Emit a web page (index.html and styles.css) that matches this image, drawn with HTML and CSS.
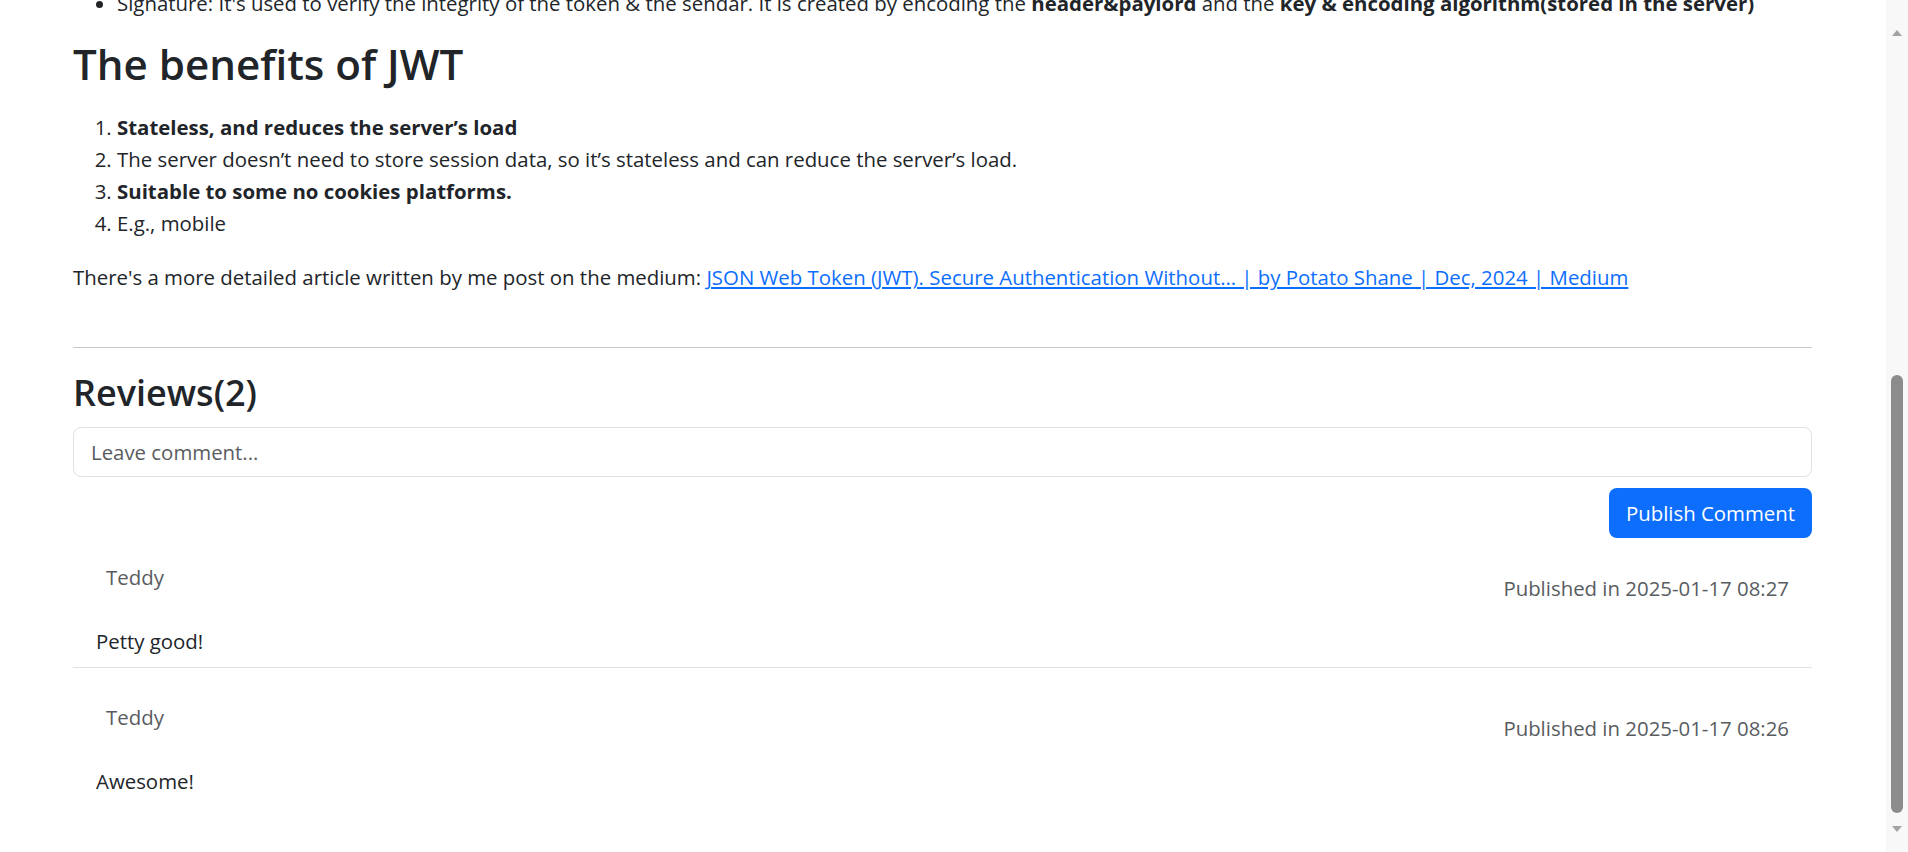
FILE: index.html
```html
<!DOCTYPE html>
<html lang="en">
<head>
<meta charset="utf-8">
<title>The benefits of JWT</title>
<link rel="stylesheet" href="styles.css">
</head>
<body>
<div class="window">
  <main class="page">
    <div class="content">
      <ul class="top-list">
        <li>Signature: It's used to verify the integrity of the token &amp; the sendar. It is created by encoding the <b>header&amp;paylord</b> and the <b>key &amp; encoding algorithm(stored in the server)</b></li>
      </ul>
      <h2 class="title">The benefits of JWT</h2>
      <ol class="benefits">
        <li><b>Stateless, and reduces the server’s load</b></li>
        <li>The server doesn’t need to store session data, so it’s stateless and can reduce the server’s load.</li>
        <li><b>Suitable to some no cookies platforms.</b></li>
        <li>E.g., mobile</li>
      </ol>
      <p class="more">There's a more detailed article written by me post on the medium: <a href="#" class="link">JSON Web Token (JWT). Secure Authentication Without… | by Potato Shane | Dec, 2024 | Medium</a></p>
      <hr class="divider">
      <h3 class="reviews-title">Reviews(2)</h3>
      <div class="comment-form">
        <input class="comment-input" type="text" placeholder="Leave comment...">
        <div class="form-actions">
          <button class="btn-publish" type="button">Publish Comment</button>
        </div>
      </div>
      <div class="comments">
        <div class="comment">
          <div class="comment-head">
            <span class="author">Teddy</span>
            <span class="date">Published in 2025-01-17 08:27</span>
          </div>
          <div class="comment-body">Petty good!</div>
        </div>
        <div class="comment">
          <div class="comment-head">
            <span class="author">Teddy</span>
            <span class="date">Published in 2025-01-17 08:26</span>
          </div>
          <div class="comment-body">Awesome!</div>
        </div>
      </div>
    </div>
  </main>
  <div class="scrollbar">
    <span class="arrow-up"></span>
    <span class="thumb"></span>
    <span class="arrow-down"></span>
  </div>
</div>
</body>
</html>
```
FILE: styles.css
```css
html, body {
  margin: 0;
  padding: 0;
  height: 852px;
  overflow: hidden;
  background: #ffffff;
}

body {
  font-family: "Open Sans", "Noto Sans", sans-serif;
  font-size: 20.4px;
  line-height: 32px;
  color: #212529;
}

.window {
  display: flex;
  height: 852px;
}

.page {
  flex: 1;
  overflow: hidden;
}

.content {
  padding: 0 74px 0 73px;
  margin-top: -13px;
}

.top-list {
  margin: 0 0 17px;
  padding-left: 44px;
  white-space: nowrap;
}

.top-list b, .benefits b {
  font-weight: 700;
}

.title {
  font-size: 42.1px;
  line-height: 55px;
  font-weight: 600;
  margin: 0 0 20px;
}

.benefits {
  margin: 0 0 22px;
  padding-left: 44px;
}

.more {
  margin: 0 0 54px;
}

.link {
  color: #0d6efd;
  text-decoration: underline;
}

.divider {
  border: 0;
  border-top: 1px solid #c8c9ca;
  margin: 0 0 22px;
}

.reviews-title {
  font-size: 36px;
  line-height: 46px;
  font-weight: 600;
  margin: 0 0 11px;
}

.comment-form {
  display: flex;
  flex-direction: column;
  gap: 11px;
}

.comment-input {
  box-sizing: border-box;
  height: 50px;
  width: 100%;
  border: 1px solid #dee2e6;
  border-radius: 8px;
  padding: 0 17px;
  font: inherit;
  color: #212529;
  outline: none;
}

.comment-input::placeholder {
  color: #595c5f;
}

.form-actions {
  display: flex;
  justify-content: flex-end;
}

.btn-publish {
  box-sizing: border-box;
  height: 50px;
  width: 203px;
  border: 0;
  border-radius: 8px;
  background: #0d6efd;
  color: #ffffff;
  font: inherit;
  padding: 0;
}

.comment {
  border-bottom: 1px solid #dee2e6;
  padding: 33px 23px 10px;
}

.comment:first-child {
  padding-top: 23px;
}

.comment:last-child {
  border-bottom: 0;
}

.comment-head {
  display: flex;
  justify-content: space-between;
  align-items: flex-start;
}

.author {
  color: #595c5f;
  padding-left: 10px;
}

.date {
  color: #595c5f;
  padding-top: 11px;
}

.comment-body {
  margin-top: 21px;
}

.scrollbar {
  width: 22px;
  background: #f8f8f8;
  display: flex;
  flex-direction: column;
  align-items: center;
}

.arrow-up {
  margin-top: 30px;
  width: 0;
  height: 0;
  border-left: 5px solid transparent;
  border-right: 5px solid transparent;
  border-bottom: 6px solid #a3a3a3;
}

.thumb {
  margin-top: 339px;
  width: 12px;
  height: 438px;
  border-radius: 6px;
  background: #8c8c8c;
}

.arrow-down {
  margin-top: 13px;
  width: 0;
  height: 0;
  border-left: 5px solid transparent;
  border-right: 5px solid transparent;
  border-top: 6px solid #a3a3a3;
}
```
